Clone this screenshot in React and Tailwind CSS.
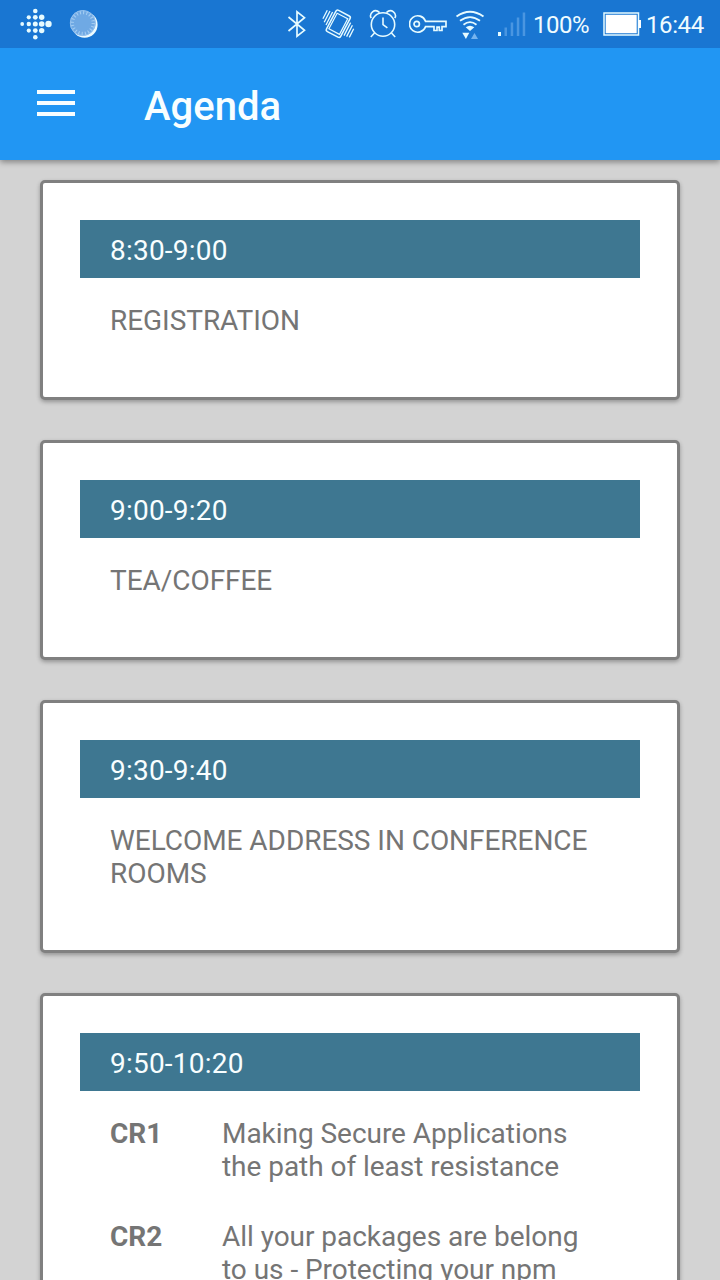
const sessions = [
  { time: '8:30-9:00', title: 'REGISTRATION' },
  { time: '9:00-9:20', title: 'TEA/COFFEE' },
  { time: '9:30-9:40', title: 'WELCOME ADDRESS IN CONFERENCE ROOMS' },
  {
    time: '9:50-10:20',
    talks: [
      { room: 'CR1', title: 'Making Secure Applications the path of least resistance' },
      { room: 'CR2', title: 'All your packages are belong to us - Protecting your npm' },
    ],
  },
];

// [x, y, radius]
const fitbitDots = [
  [15.3, 3, 2.3],
  [8.8, 9.3, 2.1], [15.3, 9.3, 2.4], [21.7, 9.3, 2.7],
  [2.2, 16, 1.9], [8.8, 16, 2.2], [15.3, 16, 2.5], [21.7, 16, 2.8], [28.5, 16, 3.2],
  [8.8, 22.6, 2.1], [15.3, 22.6, 2.4], [21.7, 22.6, 2.7],
  [15.3, 29.3, 2.3],
];

const FitbitIcon = () => (
  <svg className="w-8 h-8" viewBox="0 0 32 32" fill="#e6fbff">
    {fitbitDots.map(([x, y, r]) => (
      <circle key={`${x}-${y}`} cx={x} cy={y} r={r} />
    ))}
  </svg>
);

const SyncIcon = () => (
  <svg className="w-8 h-8 ml-4" viewBox="0 0 32 32" fill="none">
    <circle cx="16.6" cy="16.8" r="13" fill="#ecfbff" />
    <circle cx="14.8" cy="15" r="12.8" fill="#6fa9e4" />
    <circle cx="14.8" cy="15" r="10.6" stroke="#a4cdf2" strokeWidth="3.6" strokeDasharray="1.1 2.23" />
    <circle cx="14.8" cy="15" r="12.5" stroke="#94c1ee" strokeWidth="1" />
  </svg>
);

const BluetoothIcon = () => (
  <svg className="w-5 h-7" viewBox="0 0 20 28" fill="none" stroke="#e6fbff" strokeWidth="1.7">
    <path d="M1.5 7 17.5 20.3 10 26.2V1.8l7.5 5.9L1.5 21" />
  </svg>
);

const VibrateIcon = () => (
  <svg className="w-[34px] h-8 ml-[15px]" viewBox="0 0 34 32" fill="none" stroke="#e6fbff" strokeWidth="1.5">
    <g transform="rotate(28 16.3 15.8)">
      <rect x="8.3" y="3.8" width="16" height="24" rx="2" />
      <rect x="10.3" y="7" width="12" height="17.6" strokeWidth="1.2" />
    </g>
    <path d="M5.3 2.2.9 10.8M8 3 2.2 14.3M10.6 4 4 17" strokeWidth="1.3" />
    <path d="M27.3 29.4l4.4-8.6M24.6 28.6l5.8-11.3M22 27.6l6.6-13" strokeWidth="1.3" />
  </svg>
);

const AlarmIcon = () => (
  <svg className="w-7 h-8 ml-[13px]" viewBox="0 0 28 32" fill="none" stroke="#e6fbff" strokeWidth="1.6">
    <circle cx="14" cy="16.5" r="11.7" />
    <path d="M14 9.5v7.2l4.4 3.2M5.5 25l-3.7 4M22.5 25l3.7 4" />
    <path d="M2.2 10.2C-.3 5.8 5.5-.2 10.6 4.6M25.8 10.2C28.3 5.8 22.5-.2 17.4 4.6" />
  </svg>
);

const KeyIcon = () => (
  <svg className="w-[39px] h-5 ml-3" viewBox="0 0 39 20" fill="none" stroke="#e6fbff" strokeWidth="1.7">
    <path d="M16.5 7.3A8.2 8.2 0 1 0 16.5 12.7H25V16.5H28V13.2H30.3V16.5H33V12.7H37V7.3Z" />
    <circle cx="7.7" cy="10" r="2.7" />
  </svg>
);

const WifiIcon = () => (
  <svg className="w-[30px] h-8 ml-[7px]" viewBox="0 0 30 32" fill="none" stroke="#e6fbff" strokeWidth="1.8">
    <path d="M1.5 8.5q13.5-9.5 27 0M5 12.8q10-7.5 20 0M8.5 16.7q6.5-5 13 0" />
    <path d="m15 23-4.3-3.8q4.3-3 8.6 0Z" fill="#e6fbff" stroke="none" />
    <path d="M7.3 24.7h7L10.9 31Z" fill="#e6fbff" stroke="none" />
    <path d="M16 31h7l-3.5-6Z" fill="#75b3ee" stroke="none" />
  </svg>
);

const SignalIcon = () => (
  <svg className="w-7 h-6 ml-[13px]" viewBox="0 0 28 24" fill="#4a96e1">
    <path d="M0 20h3v4H0z" fill="#e6fbff" />
    <path d="M6.5 15.5H9V24H6.5zM12.7 10.5h2.5V24h-2.5zM18.8 5.5h2.5V24h-2.5zM24.7.5h2.5V24h-2.5z" />
  </svg>
);

const BatteryIcon = () => (
  <svg className="w-[38px] h-6 ml-[13px]" viewBox="0 0 38 24" fill="none">
    <path d="M1 1h34.5v22H1z" stroke="#e6fbff" strokeWidth="1.5" />
    <path d="M2.7 2.7h31v18.6h-31zM35.5 8H38v8h-2.5z" fill="#fff" />
  </svg>
);

const StatusBar = () => (
  <div className="flex items-center justify-between h-12 pl-5 pr-[14px] bg-[#1976d2] text-2xl text-[#f0fcff]">
    <div className="flex items-center">
      <FitbitIcon />
      <SyncIcon />
    </div>
    <div className="flex items-center whitespace-nowrap">
      <BluetoothIcon />
      <VibrateIcon />
      <AlarmIcon />
      <KeyIcon />
      <WifiIcon />
      <SignalIcon />
      <span className="w-[57px] ml-[7px] pt-px tracking-[-0.5px]">100%</span>
      <BatteryIcon />
      <span className="w-[60px] ml-[5px] pt-px tracking-[-0.4px]">16:44</span>
    </div>
  </div>
);

const AppBar = () => (
  <header className="relative z-10 shadow-[0_2px_6px_rgba(0,0,0,0.4)]">
    <StatusBar />
    <div className="flex items-center h-28 pl-[37px] bg-[#2196f3]">
      <button className="flex flex-col gap-[7px] w-[38px] mb-[2px]" aria-label="Menu">
        <span className="h-1 w-full bg-[#f8feff]" />
        <span className="h-1 w-full bg-[#f8feff]" />
        <span className="h-1 w-full bg-[#f8feff]" />
      </button>
      <h1 className="ml-[69px] mt-[6px] text-[40px] leading-12 font-medium text-[#f8feff]">Agenda</h1>
    </div>
  </header>
);

const SessionCard = ({ session }) => (
  <section className="shrink-0 px-[37px] pt-[37px] pb-[60px] bg-white border-3 border-[#808080] rounded-[5px] shadow-[0_2px_4px_rgba(0,0,0,0.3)]">
    <div className="h-[58px] px-[30px] pt-[14px] bg-[#3e7791] text-[#f8feff] tracking-[0.22px]">{session.time}</div>
    <div className="px-[30px] pt-[26px]">
      {session.title && <p className="tracking-[-0.05px]">{session.title}</p>}
      {session.talks && (
        <div className="flex flex-col gap-[37px]">
          {session.talks.map((talk) => (
            <div key={talk.room} className="flex">
              <span className="w-28 shrink-0 font-bold">{talk.room}</span>
              <p className="w-[370px] tracking-[-0.04px]">{talk.title}</p>
            </div>
          ))}
        </div>
      )}
    </div>
  </section>
);

export default function App() {
  return (
    <div className="flex flex-col h-[1280px] overflow-hidden bg-[#d3d3d3] font-[Roboto,sans-serif]">
      <AppBar />
      <main className="flex flex-col flex-1 min-h-0 gap-10 px-10 pt-5 overflow-hidden text-[28px] leading-[33px] text-[#757575]">
        {sessions.map((session) => (
          <SessionCard key={session.time} session={session} />
        ))}
      </main>
    </div>
  );
}
